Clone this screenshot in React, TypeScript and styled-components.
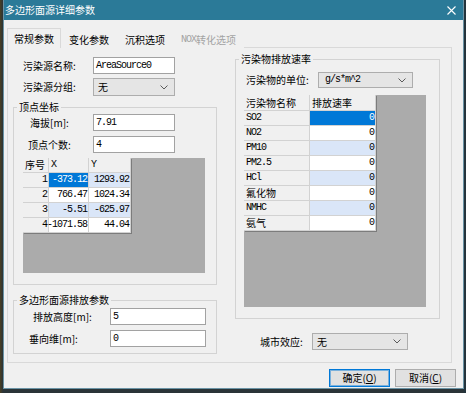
import React from 'react';
import styled, { createGlobalStyle } from 'styled-components';

const cjk = `"Noto Sans CJK SC", "Liberation Sans", sans-serif`;
const mono = `"Liberation Mono", "Noto Sans CJK SC", monospace`;

const Global = createGlobalStyle`
  html, body { margin: 0; padding: 0; }
  body {
    width: 466px; height: 393px; overflow: hidden;
    background: linear-gradient(90deg, #4a3f22 0, #2a3438 3px, #2a3438 463px, #24343c 464px);
    font-family: ${cjk};
    color: #000;
  }
`;

const Window = styled.div`
  margin-left: 3px;
  width: 461px;
  height: 389px;
  box-sizing: border-box;
  background: #f0f0f0;
  border: 1px solid #6a93a5;
  border-top: 0;
  display: flex;
  flex-direction: column;
`;

const TitleBar = styled.div`
  height: 20px;
  flex: none;
  background: #2b7a98;
  color: #fff;
  display: flex;
  align-items: center;
  justify-content: space-between;
  padding: 0 7px 0 1px;
  font: 10px/1 ${cjk};
`;

const Body = styled.div`
  flex: 1;
  display: flex;
  flex-direction: column;
  padding: 8px 0 0 3px;
`;

const TabStrip = styled.div`
  display: flex;
  align-items: flex-end;
  height: 20px;
  margin-bottom: -1px;
  position: relative;
  z-index: 1;
`;

const Tab = styled.div<{ $active?: boolean; $disabled?: boolean }>`
  box-sizing: border-box;
  height: ${(p) => (p.$active ? 20 : 18)}px;
  padding: 0 ${(p) => (p.$active ? 6 : 7)}px;
  border: 1px solid ${(p) => (p.$active ? '#d9d9d9' : 'transparent')};
  border-bottom: 0;
  background: #f0f0f0;
  display: flex;
  align-items: center;
  font: 10px/1 ${cjk};
  color: ${(p) => (p.$disabled ? '#a3a3a3' : '#000')};
  white-space: nowrap;
`;

const TabLatin = styled.span`
  font-family: ${mono};
  letter-spacing: -1px;
`;

const Panel = styled.div`
  box-sizing: border-box;
  width: 445px;
  height: 316px;
  border: 1px solid #d9d9d9;
  display: grid;
  grid-template-columns: 204px 205px;
  column-gap: 18px;
  padding-left: 5px;
  align-items: start;
`;

const Column = styled.div`
  display: flex;
  flex-direction: column;
`;

const FieldRow = styled.div<{ $labelW: number; $mt: number }>`
  display: grid;
  grid-template-columns: ${(p) => p.$labelW}px auto;
  align-items: center;
  justify-content: start;
  margin-top: ${(p) => p.$mt}px;
`;

const Label = styled.div<{ $indent: number }>`
  padding-left: ${(p) => p.$indent}px;
  font: 10px/12px ${cjk};
  white-space: nowrap;
`;

const Input = styled.div<{ $w: number; $h: number }>`
  box-sizing: border-box;
  width: ${(p) => p.$w}px;
  height: ${(p) => p.$h}px;
  background: #fff;
  border: 1px solid #a2a2a2;
  padding-left: 2px;
  display: flex;
  align-items: center;
  font: 10px/1 ${mono};
  letter-spacing: -1px;
`;

const Select = styled.div<{ $w: number; $h: number }>`
  box-sizing: border-box;
  width: ${(p) => p.$w}px;
  height: ${(p) => p.$h}px;
  background: #e5e5e5;
  border: 1px solid #adadad;
  padding: 0 6px 0 3px;
  display: flex;
  align-items: center;
  justify-content: space-between;
`;

const SelectText = styled.span<{ $latin?: boolean }>`
  font: 10px/1 ${(p) => (p.$latin ? mono : cjk)};
  letter-spacing: ${(p) => (p.$latin ? '-1px' : '0')};
  padding-left: ${(p) => (p.$latin ? 3 : 1)}px;
`;

const Group = styled.fieldset<{ $mt: number; $pb: number }>`
  margin: ${(p) => p.$mt}px 0 0;
  padding: 0 0 ${(p) => p.$pb}px;
  border: 1px solid #d3d3d3;
  min-width: 0;
  display: flex;
  flex-direction: column;
`;

const Legend = styled.legend`
  margin-left: 3px;
  padding: 0 2px;
  font: 10px/12px ${cjk};
`;

const GridArea = styled.div<{ $w: number; $h: number; $ml: number; $mt: number }>`
  width: ${(p) => p.$w}px;
  height: ${(p) => p.$h}px;
  margin: ${(p) => p.$mt}px 0 0 ${(p) => p.$ml}px;
  background: #ababab;
`;

const Table = styled.div<{ $cols: string; $head: number; $row: number }>`
  display: grid;
  grid-template-columns: ${(p) => p.$cols};
  grid-template-rows: ${(p) => p.$head}px;
  grid-auto-rows: ${(p) => p.$row}px;
  width: max-content;
  box-shadow: 1px 1px 0 #7c7c7c;
`;

type CellKind = 'head' | 'sel' | 'alt' | 'plain';
const cellBg: Record<CellKind, string> = {
  head: '#f0f0f0',
  sel: '#0078d7',
  alt: '#dae6f8',
  plain: '#ffffff',
};

const Cell = styled.div<{ $kind: CellKind; $right?: boolean; $latin?: boolean }>`
  box-sizing: border-box;
  border-right: 1px solid #d2d2d2;
  border-bottom: 1px solid #d2d2d2;
  background: ${(p) => cellBg[p.$kind]};
  color: ${(p) => (p.$kind === 'sel' ? '#fff' : '#000')};
  display: flex;
  align-items: center;
  justify-content: ${(p) => (p.$right ? 'flex-end' : 'flex-start')};
  padding: 0 ${(p) => (p.$right ? 1 : 2)}px 0 2px;
  font: 10px/1 ${(p) => (p.$latin ? mono : cjk)};
  letter-spacing: ${(p) => (p.$latin ? '-1px' : '0')};
  white-space: nowrap;
`;

const Footer = styled.div`
  display: flex;
  justify-content: flex-end;
  gap: 5px;
  margin-top: 6px;
  padding-right: 7px;
`;

const Button = styled.div<{ $default?: boolean }>`
  box-sizing: border-box;
  width: 61px;
  height: 18px;
  background: #e1e1e1;
  border: 1px solid ${(p) => (p.$default ? '#0078d7' : '#adadad')};
  box-shadow: ${(p) => (p.$default ? 'inset 0 0 0 1px rgba(0,120,215,0.45)' : 'none')};
  display: flex;
  align-items: center;
  justify-content: center;
  font: 10px/1 ${cjk};
`;

const Key = styled.span`
  text-decoration: underline;
`;

const Chevron = () => (
  <svg width="8" height="5" viewBox="0 0 8 5">
    <polyline points="0.5,0.5 4,4 7.5,0.5" fill="none" stroke="#5a5a5a" strokeWidth="1" />
  </svg>
);

const CloseIcon = () => (
  <svg width="9" height="9" viewBox="0 0 9 9">
    <path d="M0.5 0.5 L8.5 8.5 M8.5 0.5 L0.5 8.5" stroke="#fff" strokeWidth="1.1" />
  </svg>
);

const vertices: [string, string, CellKind, CellKind][] = [
  ['-373.12', '1293.92', 'sel', 'alt'],
  ['766.47', '1024.34', 'plain', 'plain'],
  ['-5.51', '-625.97', 'alt', 'alt'],
  ['-1071.58', '44.04', 'plain', 'plain'],
];

const pollutants: [string, boolean, CellKind][] = [
  ['SO2', true, 'sel'],
  ['NO2', true, 'plain'],
  ['PM10', true, 'alt'],
  ['PM2.5', true, 'plain'],
  ['HCl', true, 'alt'],
  ['氟化物', false, 'plain'],
  ['NMHC', true, 'alt'],
  ['氨气', false, 'plain'],
];

export default function App() {
  return (
    <>
      <Global />
      <Window>
        <TitleBar>
          <span>多边形面源详细参数</span>
          <CloseIcon />
        </TitleBar>
        <Body>
          <TabStrip>
            <Tab $active>常规参数</Tab>
            <Tab>变化参数</Tab>
            <Tab>沉积选项</Tab>
            <Tab $disabled>
              <TabLatin>NOX</TabLatin>转化选项
            </Tab>
          </TabStrip>
          <Panel>
            <Column>
              <FieldRow $labelW={80} $mt={9}>
                <Label $indent={10}>污染源名称:</Label>
                <Input $w={82} $h={17}>AreaSource0</Input>
              </FieldRow>
              <FieldRow $labelW={80} $mt={4}>
                <Label $indent={10}>污染源分组:</Label>
                <Select $w={82} $h={18}>
                  <SelectText>无</SelectText>
                  <Chevron />
                </Select>
              </FieldRow>
              <Group $mt={5} $pb={11}>
                <Legend>顶点坐标</Legend>
                <FieldRow $labelW={79} $mt={1}>
                  <Label $indent={16}>海拔[m]:</Label>
                  <Input $w={82} $h={17}>7.91</Input>
                </FieldRow>
                <FieldRow $labelW={79} $mt={5}>
                  <Label $indent={14}>顶点个数:</Label>
                  <Input $w={82} $h={17}>4</Input>
                </FieldRow>
                <GridArea $w={182} $h={115} $ml={9} $mt={5}>
                  <Table $cols="26px 40px 42px" $head={15} $row={15}>
                    <Cell $kind="head">序号</Cell>
                    <Cell $kind="head" $latin>X</Cell>
                    <Cell $kind="head" $latin>Y</Cell>
                    {vertices.map(([x, y, kx, ky], i) => (
                      <React.Fragment key={i}>
                        <Cell $kind="head" $right $latin>{i + 1}</Cell>
                        <Cell $kind={kx} $right $latin>{x}</Cell>
                        <Cell $kind={ky} $right $latin>{y}</Cell>
                      </React.Fragment>
                    ))}
                  </Table>
                </GridArea>
              </Group>
              <Group $mt={9} $pb={6}>
                <Legend>多边形面源排放参数</Legend>
                <FieldRow $labelW={96} $mt={2}>
                  <Label $indent={19}>排放高度[m]:</Label>
                  <Input $w={96} $h={17}>5</Input>
                </FieldRow>
                <FieldRow $labelW={96} $mt={5}>
                  <Label $indent={15}>垂向维[m]:</Label>
                  <Input $w={96} $h={17}>0</Input>
                </FieldRow>
              </Group>
            </Column>
            <Column>
              <Group $mt={5} $pb={11}>
                <Legend>污染物排放速率</Legend>
                <FieldRow $labelW={82} $mt={7}>
                  <Label $indent={10}>污染物的单位:</Label>
                  <Select $w={95} $h={16}>
                    <SelectText $latin>g/s*m^2</SelectText>
                    <Chevron />
                  </Select>
                </FieldRow>
                <GridArea $w={182} $h={212} $ml={8} $mt={7}>
                  <Table $cols="66px 66px" $head={16} $row={15}>
                    <Cell $kind="head">污染物名称</Cell>
                    <Cell $kind="head">排放速率</Cell>
                    {pollutants.map(([name, latin, kind]) => (
                      <React.Fragment key={name}>
                        <Cell $kind="head" $latin={latin}>{name}</Cell>
                        <Cell $kind={kind} $right $latin>0</Cell>
                      </React.Fragment>
                    ))}
                  </Table>
                </GridArea>
              </Group>
              <FieldRow $labelW={77} $mt={14}>
                <Label $indent={25}>城市效应:</Label>
                <Select $w={96} $h={17}>
                  <SelectText>无</SelectText>
                  <Chevron />
                </Select>
              </FieldRow>
            </Column>
          </Panel>
          <Footer>
            <Button $default>
              确定(<Key>O</Key>)
            </Button>
            <Button>
              取消(<Key>C</Key>)
            </Button>
          </Footer>
        </Body>
      </Window>
    </>
  );
}
